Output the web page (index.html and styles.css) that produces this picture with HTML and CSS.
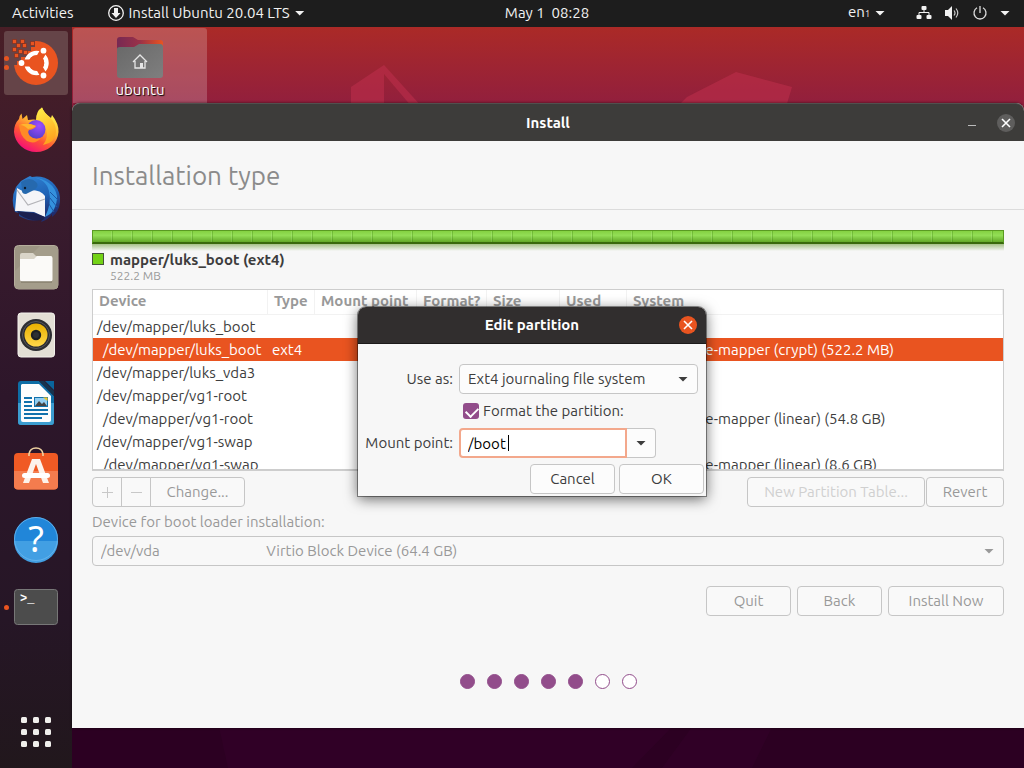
FILE: index.html
```html
<!DOCTYPE html>
<html lang="en">
<head>
    <meta charset="UTF-8">
    <title>Install</title>
    <meta name="viewport" content="width=device-width,initial-scale=1.0">
    <link rel="stylesheet" href="styles.css">
</head>
<body>
<div class="topbar">
    <div class="topLeft">
        <button class="barBtn">Activities</button>
        <button class="barBtn appMenu">
            <svg width="16" height="16" viewBox="0 0 16 16"><circle cx="8" cy="8" r="7.3" fill="none" stroke="#f2f2f2" stroke-width="1.3"/><path d="M6 3h4v5h2.5L8 13 3.500 8H6z" fill="#f2f2f2"/></svg>
            <span>Install Ubuntu 20.04 LTS</span>
            <i class="caret"></i>
        </button>
    </div>
    <button class="barBtn clock">May 1&nbsp; 08:28</button>
    <div class="topRight">
        <button class="barBtn lang"><span>en<small>1</small></span><i class="caret"></i></button>
        <button class="barBtn status" aria-label="System menu">
            <svg width="16" height="16" viewBox="0 0 16 16" fill="#f2f2f2"><rect x="5.500" y="1" width="5" height="4" rx="1"/><rect x="0.500" y="10" width="5" height="4" rx="1"/><rect x="10.500" y="10" width="5" height="4" rx="1"/><path d="M8 5v3M3 10V7.500h10V10" fill="none" stroke="#f2f2f2"/></svg>
            <svg width="16" height="16" viewBox="0 0 16 16"><path d="M1 5h3l4-4v14l-4-4H1z" fill="#f2f2f2"/><path d="M10 5.500q2 2.500 0 5M12 3.500q3.500 4.500 0 9" fill="none" stroke="#ccc" stroke-width="1.200"/></svg>
            <svg width="16" height="16" viewBox="0 0 16 16" fill="none" stroke="#ddd" stroke-width="1.300"><path d="M8 1v7M5 2.800a6 6 0 1 0 6 0"/></svg>
            <i class="caret"></i>
        </button>
    </div>
</div>
<div class="workspace">
    <div class="dock">
        <button class="dockItem active" aria-label="Install Ubuntu">
            <span class="run"><i></i><i></i></span>
            <svg width="48" height="48" viewBox="0 0 48 48">
                <clipPath id="cut"><path d="M23 0H48V48H0V26H5V22H9V18H15V12H19V8H23z"/></clipPath>
                <g fill="#e95420">
                    <circle cx="24" cy="24" r="22" clip-path="url(#cut)"/>
                    <path d="M0.500 0.500h4v4h-4zM8.500 0.500h4v4h-4zM18.500 2.500h4v4h-4zM4.500 4.500h4v4h-4zM10.500 4.500h4v4h-4zM0.500 8.500h4v4h-4zM6.500 10.500h4v4h-4zM11.500 11.500h4v4h-4zM2.500 14.500h4v4h-4z" stroke="#7a2c1c" stroke-width="0.600"/>
                </g>
                <circle cx="24.500" cy="24" r="10" fill="none" stroke="#fff" stroke-width="4.500"/>
                <path d="M24.500 24L31.500 12M24.500 24L31.500 36M24.500 24H10" stroke="#e95420" stroke-width="7"/>
                <circle cx="24.500" cy="24" r="7.700" fill="#e95420"/>
                <g fill="#fff"><circle cx="31.500" cy="11.700" r="2.900"/><circle cx="9.500" cy="24" r="2.900"/><circle cx="31.500" cy="36.500" r="2.900"/></g>
            </svg>
        </button>
        <button class="dockItem" aria-label="Firefox">
            <svg width="48" height="48" viewBox="0 0 48 48">
                <defs>
                    <linearGradient id="ff" x1="0.800" y1="0.100" x2="0.300" y2="1"><stop offset="0" stop-color="#fff44f"/><stop offset="0.350" stop-color="#ffb932"/><stop offset="0.650" stop-color="#ff5634"/><stop offset="1" stop-color="#f4087c"/></linearGradient>
                    <linearGradient id="fy" x1="0" y1="0" x2="0.300" y2="1"><stop offset="0" stop-color="#fff24a"/><stop offset="1" stop-color="#ffa51f"/></linearGradient>
                    <radialGradient id="fg" cx="0.650" cy="0.300" r="0.800"><stop offset="0" stop-color="#9f4dff"/><stop offset="1" stop-color="#4d3ec4"/></radialGradient>
                </defs>
                <path d="M9.500 6.500L10.500 12L15 8L16 13Q22 12 25 13Q25 5 30 0.500Q32 6 39 11L40 8Q47 17 46.500 25A22.300 21.500 0 0 1 2 25Q2 17 7 12Q7 9 9.500 6.500z" fill="url(#ff)"/>
                <path d="M24 13Q24 4 30 0.500Q32 6 38 10.500Q44 16 44 25Q43 36 31 38Q37 31 34 21Q31 14 24 13z" fill="url(#fy)"/>
                <circle cx="24" cy="22.500" r="9.500" fill="url(#fg)"/>
                <path d="M7 18Q14 14 24 19Q23 22 17 23Q15 25 18 29Q22 33 29 31Q23 38 15 34Q8 29 7 18z" fill="#ff8a27"/>
                <path d="M8 18Q15 15 24 19Q20 22 16 22Q12 18 8 18z" fill="#ffb52f"/>
            </svg>
        </button>
        <button class="dockItem" aria-label="Thunderbird">
            <svg width="48" height="48" viewBox="0 0 48 48">
                <defs><linearGradient id="tb" x1="0" y1="0" x2="0.400" y2="1"><stop offset="0" stop-color="#3387d8"/><stop offset="0.600" stop-color="#1f62b5"/><stop offset="1" stop-color="#202c6c"/></linearGradient></defs>
                <path d="M9 6Q14 3 18 1L20 2Q31 0 40 7Q49 15 48 27Q47 37 40 42L40 39Q37 44 29 47L31 43Q22 48 11 43L7 41V38L3 37Q-2 24 4 12z" fill="url(#tb)"/>
                <path d="M5 13Q14 19 19 15Q29 15 33 21V42L22 37L3 36z" fill="#f5f5f8"/>
                <path d="M5 15L16 30L33 24" fill="none" stroke="#b3b3b8" stroke-width="1.200"/>
                <path d="M9 7Q18 1 24 7Q28 11 22 15L14 19Q9 19 10 14z" fill="#2669ae"/>
                <circle cx="13" cy="13" r="1.200" fill="#0c1b30"/>
                <path d="M20 2Q34 4 37 16Q40 28 33 42Q45 37 45 21Q42 5 20 2z" fill="#3491dd"/>
                <path d="M38 17L46 25M38 23L45 32M37 29L42 37" stroke="#1b57a5" fill="none"/>
                <path d="M5 36L22 38L33 42L31 45Q18 47 8 40z" fill="#1a2050"/>
            </svg>
        </button>
        <button class="dockItem" aria-label="Files">
            <svg width="48" height="48" viewBox="0 0 48 48">
                <rect x="2.500" y="2.500" width="43.500" height="43.500" rx="4" fill="#9c9583" stroke="#b5ae9c"/>
                <path d="M3 28L28 3H42Q46 3 46 7V42Q46 46 42 46H7Q3 46 3 42z" fill="#a49d8b"/>
                <path d="M8 12Q8 10 10 10H21L24 13H38Q40 13 40 15V20H8z" fill="#d9d4c8"/>
                <path d="M8 16H22L25 13H38.500Q40.500 13 40.500 15V36.500Q40.500 38.500 38.500 38.500H10Q8 38.500 8 36.500z" fill="#fbfaf8"/>
                <path d="M9 39H40" stroke="#797260"/>
            </svg>
        </button>
        <button class="dockItem" aria-label="Rhythmbox">
            <svg width="48" height="48" viewBox="0 0 48 48">
                <defs><linearGradient id="rb" x1="0" y1="0" x2="0" y2="1"><stop offset="0" stop-color="#e8b000"/><stop offset="1" stop-color="#ffd84a"/></linearGradient></defs>
                <rect x="6" y="2" width="36.500" height="44" rx="3" fill="#e3dfd5" stroke="#f3f1ec"/>
                <circle cx="24" cy="24" r="16" fill="#2c2d31"/><circle cx="24" cy="24" r="13.500" fill="none" stroke="#54565b"/>
                <circle cx="24" cy="24" r="11.500" fill="url(#rb)"/><circle cx="24" cy="24" r="5.200" fill="#1d1f22"/><circle cx="24" cy="24" r="3" fill="#2e3033"/>
            </svg>
        </button>
        <button class="dockItem" aria-label="LibreOffice Writer">
            <svg width="48" height="48" viewBox="0 0 48 48">
                <path d="M9 2H27L42 17V43Q42 46 39 46H9Q6 46 6 43V5Q6 2 9 2z" fill="#0e6da5"/>
                <path d="M6 24H42V43Q42 46 39 46H9Q6 46 6 43z" fill="#3c9dd0"/>
                <path d="M33 2H42V11z" fill="#0a659d"/>
                <path d="M10 5H27L39 17V41Q39 43 37 43H11Q9 43 9 41V6z" fill="#fdfdfd"/>
                <path d="M27 2L42 17V12L32 2z" fill="#17334d"/>
                <path d="M12 19H20M12 23H20M12 27H20M12 31H36M12 35H36M12 39H30" stroke="#1272ad" stroke-width="1.800"/>
                <rect x="22.500" y="18.500" width="13" height="9" fill="#92cdf0" stroke="#1272ad"/>
                <path d="M23 27L27 22L30 25L32 23L35 27z" fill="#444"/><path d="M31 18.500H35.500V22z" fill="#f3c623"/>
            </svg>
        </button>
        <button class="dockItem" aria-label="Ubuntu Software">
            <svg width="48" height="48" viewBox="0 0 48 48">
                <rect x="2" y="6" width="44" height="36.500" rx="4" fill="#f05a24"/>
                <path d="M2 24H46V38.500Q46 42.500 42 42.500H6Q2 42.500 2 38.500z" fill="#f47c4e"/>
                <path d="M17 9V7Q18 1 24 1Q30 1 31 7V9" fill="none" stroke="#efd2a0" stroke-width="1.600"/>
                <path d="M20 12H28L37 36H31L24 17L17 36H11z" fill="#fdf3ec"/>
                <rect x="10" y="26" width="28" height="5" rx="2.500" fill="#fff"/>
            </svg>
        </button>
        <button class="dockItem" aria-label="Help">
            <svg width="48" height="48" viewBox="0 0 48 48">
                <circle cx="24" cy="24" r="22" fill="#2186d9"/><path d="M2 26H46A22 22 0 0 1 2 26z" fill="#429fe3"/>
                <circle cx="24" cy="24" r="21.500" fill="none" stroke="#6cb8ee" stroke-width="0.800"/>
                <text x="24" y="37" text-anchor="middle" class="helpMark">?</text>
            </svg>
        </button>
        <button class="dockItem" aria-label="Terminal">
            <span class="run"><i></i></span>
            <svg width="48" height="48" viewBox="0 0 48 48">
                <rect x="2.500" y="6.500" width="43" height="35" rx="3" fill="#4c4c4c" stroke="#777"/>
                <text x="8" y="19" class="prompt">&gt;_</text>
            </svg>
        </button>
        <button class="dockItem showApps" aria-label="Show Applications">
            <svg width="48" height="48" viewBox="0 0 48 48" fill="#f0efec">
                <rect x="9" y="9" width="6" height="6" rx="1.500"/><rect x="21" y="9" width="6" height="6" rx="1.500"/><rect x="33" y="9" width="6" height="6" rx="1.500"/>
                <rect x="9" y="21" width="6" height="6" rx="1.500"/><rect x="21" y="21" width="6" height="6" rx="1.500"/><rect x="33" y="21" width="6" height="6" rx="1.500"/>
                <rect x="9" y="33" width="6" height="6" rx="1.500"/><rect x="21" y="33" width="6" height="6" rx="1.500"/><rect x="33" y="33" width="6" height="6" rx="1.500"/>
            </svg>
        </button>
    </div>
    <div class="desktop">
        <!-- wallpaper shapes -->
        <svg class="wall" width="952" height="741" viewBox="0 0 952 741">
            <g fill="#c0304c" fill-opacity="0.55"><path d="M279 60L312 38V90H279z"/><path d="M312 38L350 80H340L312 47z"/><path d="M605 80L615 70L664 45L720 60L714 80z"/></g>
            <path d="M147 700H600L560 741H156zM620 700H700L680 741H590z" fill="#38002e" fill-opacity="0.4"/>
        </svg>
        <div class="homeIcon">
            <svg width="48" height="44" viewBox="0 0 48 44">
                <defs>
                    <linearGradient id="fb"><stop offset="0" stop-color="#772953"/><stop offset="0.500" stop-color="#9a3148"/><stop offset="1" stop-color="#e95420"/></linearGradient>
                    <linearGradient id="fo" x1="0" y1="0" x2="1" y2="1"><stop offset="0" stop-color="#686868"/><stop offset="1" stop-color="#7f7f7f"/></linearGradient>
                </defs>
                <path d="M1 4Q1 1 4 1H17L22 4H44Q47 4 47 7V20H1z" fill="url(#fb)"/>
                <path d="M1 13Q1 11 4 11H18L23 8H44Q47 8 47 11V39Q47 42 44 42H4Q1 42 1 39z" fill="url(#fo)"/>
                <path d="M17 26L24 19L31 26M19 25V32H29V25" fill="none" stroke="#e6e6e6" stroke-width="1.300"/><path d="M24 27h3v5h-3z" fill="#e6e6e6"/>
            </svg>
            <span>ubuntu</span>
        </div>
        <div class="window">
            <div class="titlebar">
                <h1>Install</h1>
                <div class="winBtns">
                    <button class="minBtn" aria-label="Minimize"></button>
                    <button class="closeBtn" aria-label="Close"><svg width="10" height="10" viewBox="0 0 10 10"><path d="M1 1L9 9M9 1L1 9" stroke="#fff" stroke-width="1.600"/></svg></button>
                </div>
            </div>
            <h2 class="pageTitle">Installation type</h2>
            <div class="main">
                <div class="partBar"></div>
                <div class="partReflect"></div>
                <div class="legend">
                    <i></i>
                    <div>
                        <b>mapper/luks_boot (ext4)</b>
                        <p>522.2 MB</p>
                    </div>
                </div>
                <div class="tableBox">
                    <table>
                        <colgroup><col class="cDevice"><col class="cType"><col class="cMount"><col class="cFormat"><col class="cSize"><col class="cUsed"><col></colgroup>
                        <thead>
                            <tr><th>Device</th><th>Type</th><th>Mount point</th><th>Format?</th><th>Size</th><th>Used</th><th>System</th></tr>
                        </thead>
                        <tbody>
                            <tr><td>/dev/mapper/luks_boot</td><td></td><td></td><td></td><td></td><td></td><td></td></tr>
                            <tr class="selected"><td class="sub">/dev/mapper/luks_boot</td><td>ext4</td><td></td><td></td><td></td><td></td><td>Linux device-mapper (crypt) (522.2 MB)</td></tr>
                            <tr><td>/dev/mapper/luks_vda3</td><td></td><td></td><td></td><td></td><td></td><td></td></tr>
                            <tr><td>/dev/mapper/vg1-root</td><td></td><td></td><td></td><td></td><td></td><td></td></tr>
                            <tr><td class="sub">/dev/mapper/vg1-root</td><td></td><td></td><td></td><td></td><td></td><td>Linux device-mapper (linear) (54.8 GB)</td></tr>
                            <tr><td>/dev/mapper/vg1-swap</td><td></td><td></td><td></td><td></td><td></td><td></td></tr>
                            <tr><td class="sub">/dev/mapper/vg1-swap</td><td></td><td></td><td></td><td></td><td></td><td>Linux device-mapper (linear) (8.6 GB)</td></tr>
                        </tbody>
                    </table>
                </div>
                <div class="toolRow">
                    <div class="linked">
                        <button class="btn off sq" aria-label="Add"><svg width="11" height="11" viewBox="0 0 11 11"><path d="M5.500 0V11M0 5.500H11" stroke="#c8c8c8"/></svg></button>
                        <button class="btn off sq" aria-label="Remove"><svg width="11" height="11" viewBox="0 0 11 11"><path d="M0 5.500H11" stroke="#c8c8c8"/></svg></button>
                        <button class="btn dim change">Change...</button>
                    </div>
                    <div class="tableBtns">
                        <button class="btn off newTable">New Partition Table...</button>
                        <button class="btn dim revert">Revert</button>
                    </div>
                </div>
                <label class="bootLabel" for="boot">Device for boot loader installation:</label>
                <div class="selectBox dimBox">
                    <select id="boot"><option>/dev/vda&nbsp;&nbsp;&nbsp;&nbsp;&nbsp;&nbsp;&nbsp;&nbsp;&nbsp;&nbsp;&nbsp;&nbsp;&nbsp;&nbsp;&nbsp;&nbsp;&nbsp;&nbsp;&nbsp;&nbsp;&nbsp;&nbsp;&nbsp;&nbsp;&nbsp;&nbsp;&nbsp;&nbsp;&nbsp;&nbsp;&nbsp;Virtio Block Device (64.4 GB)</option></select>
                    <i class="caret"></i>
                </div>
                <div class="navRow">
                    <button class="btn dim">Quit</button>
                    <button class="btn dim">Back</button>
                    <button class="btn dim installNow">Install Now</button>
                </div>
                <div class="steps"><i class="on"></i><i class="on"></i><i class="on"></i><i class="on"></i><i class="on"></i><i></i><i></i></div>
            </div>
        </div>
        <div class="dialog" role="dialog" aria-label="Edit partition">
            <div class="dialogTitle">
                <h3>Edit partition</h3>
                <button class="closeBtn" aria-label="Close"><svg width="10" height="10" viewBox="0 0 10 10"><path d="M1 1L9 9M9 1L1 9" stroke="#fff" stroke-width="1.600"/></svg></button>
            </div>
            <form class="form" onsubmit="return false">
                <label for="useAs">Use as:</label>
                <div class="selectBox">
                    <select id="useAs"><option>Ext4 journaling file system</option></select>
                    <i class="caret"></i>
                </div>
                <div class="formatRow"><input type="checkbox" id="format" checked><label for="format">Format the partition:</label></div>
                <label for="mount">Mount point:</label>
                <div class="combo">
                    <div class="entry"><input type="text" id="mount" value="/boot"><i class="cursor"></i></div>
                    <button class="btn" type="button" aria-label="Show mount points"><i class="caret"></i></button>
                </div>
            </form>
            <div class="dialogBtns">
                <button class="btn">Cancel</button>
                <button class="btn">OK</button>
            </div>
        </div>
    </div>
</div>
</body>
</html>
```
FILE: styles.css
```css
* {
    box-sizing: border-box;
    margin: 0;
    padding: 0;
}

body {
    display: flex;
    flex-direction: column;
    height: 100vh;
    overflow: hidden;
    background: #1d1d1d;
    color: #3d3d3d;
    font: 15px/20px Ubuntu, "Noto Sans", sans-serif;
}

button, input, select {font: inherit;color: inherit;}

button {background: none;border: 0;}

svg {display: block;flex: none;}

.caret {flex: none;width: 10px;height: 5px;background: currentColor;clip-path: polygon(0 0, 100% 0, 50% 100%);}

/* top bar */
.topbar {
    flex: none;
    display: grid;
    grid-template-columns: 1fr auto 1fr;
    align-items: center;
    height: 27px;
    padding: 0 14px 1px 12px;
    color: #f2f2f2;
}

.topLeft, .topRight, .barBtn {display: flex;align-items: center;white-space: nowrap;}

.topLeft {gap: 34px;}

.topRight {justify-content: flex-end;gap: 31px;}

.barBtn {gap: 5px;}

.status {gap: 12px;}

.clock {margin-left: 72px;}

.lang small {font-size: 9px;}

/* dock */
.workspace {flex: 1;display: flex;min-height: 0;}

.dock {
    flex: none;
    display: flex;
    flex-direction: column;
    gap: 4px;
    width: 72px;
    padding: 4px;
    background: linear-gradient(#491e26, #391b2d 25%, #2d162a 50%, #261626 80%, #21171c);
}

.dockItem {flex: none;display: flex;align-items: center;justify-content: center;position: relative;width: 64px;height: 64px;border-radius: 3px;}

.dockItem.active {background: #654448;}

.showApps {margin-top: auto;}

.run {position: absolute;left: 0;top: 0;height: 100%;display: flex;flex-direction: column;justify-content: center;gap: 4px;}

.run i {width: 5px;height: 5px;border-radius: 50%;background: #e95420;}

.helpMark {font: 36px "Noto Sans", sans-serif;fill: #fff;}

.prompt {font: bold 12px "Liberation Mono", monospace;fill: #fff;}

/* desktop */
.desktop {
    flex: 1;
    position: relative;
    display: flex;
    flex-direction: column;
    min-width: 0;
    padding: 1px 0 40px;
    background: linear-gradient(#ab2a27, #921f3d 76px, #2c0022 690px);
}

.wall {position: absolute;left: 0;top: 0;}

.homeIcon {
    flex: none;
    position: relative;
    display: flex;
    flex-direction: column;
    align-items: center;
    width: 134px;
    height: 75px;
    margin-left: 1px;
    padding-top: 8px;
    border-radius: 3px 3px 0 0;
    background: rgba(255, 255, 255, 0.2);
    color: #fff;
    text-shadow: 1px 1px 1px #000;
}

/* installer window */
.window {
    flex: 1;
    position: relative;
    display: flex;
    flex-direction: column;
    min-height: 0;
    background: #f7f7f7;
    border-radius: 8px 8px 0 0;
    box-shadow: 0 0 3px rgba(0, 0, 0, 0.6);
}

.titlebar {
    flex: none;
    display: grid;
    grid-template-columns: 1fr auto 1fr;
    align-items: center;
    height: 38px;
    padding: 0 9px;
    border-top: 1px solid #51504e;
    border-radius: 8px 8px 0 0;
    background: #3d3c3a;
    color: #fff;
}

.titlebar h1 {grid-column: 2;font-size: 15px;}

.winBtns {display: flex;align-items: center;justify-content: flex-end;gap: 21px;}

.minBtn {width: 8px;height: 6px;border-bottom: 1px solid #bbb;}

.closeBtn {display: flex;align-items: center;justify-content: center;width: 18px;height: 18px;border-radius: 50%;background: #5f5e5d;}

.pageTitle {
    flex: none;
    height: 69px;
    padding: 0 20px;
    border-bottom: 1px solid #dcdcdc;
    color: #8b8b8b;
    font-size: 26px;
    font-weight: 400;
    line-height: 69px;
}

.main {display: flex;flex-direction: column;padding: 20px 20px 0;}

.partBar {
    height: 14px;
    border: 1px solid #5a9a22;
    border-bottom: 2px solid #39690c;
    background: repeating-linear-gradient(90deg, transparent 0 18px, rgba(255, 255, 255, 0.1) 18px 19px, rgba(40, 110, 0, 0.25) 19px 20px), linear-gradient(#84d142, #93de56 40%, #62a827);
}

.partReflect {height: 7px;background: linear-gradient(#a5c088, #f7f7f7);}

.legend {display: flex;gap: 6px;height: 38px;}

.legend i {width: 12px;height: 12px;margin-top: 2px;border: 1px solid #45543a;background: #73d216;}

.legend b {display: block;line-height: 18px;}

.legend p {color: #999;font-size: 12px;line-height: 13px;}

.tableBox {height: 182px;overflow: hidden;border: 1px solid #cdcdcd;border-bottom-width: 2px;background: #fff;}

table {width: 100%;border-collapse: separate;border-spacing: 0;table-layout: fixed;}

th {height: 25px;padding: 0 0 2px 6px;border-right: 1px solid #f2f2f2;border-bottom: 1px solid #f2f2f2;color: #999;text-align: left;}

td {height: 23px;padding-left: 4px;}

th, td {line-height: 20px;white-space: nowrap;}

td.sub {padding-left: 10px;}

.selected {background: #e95420;color: #fff;}

.cDevice {width: 175px;}

.cType {width: 47px;}

.cMount {width: 102px;}

.cFormat {width: 70px;}

.cSize {width: 73px;}

.cUsed {width: 67px;}

/* buttons */
.btn {display: flex;align-items: center;justify-content: center;width: 85px;height: 30px;border: 1px solid #c6c6c6;border-radius: 4px;background: #fcfcfc;white-space: nowrap;}

.btn.dim {color: #999;background: #f9f9f9;}

.btn.off {color: #d0d0d0;background: #f9f9f9;}

.toolRow {display: flex;justify-content: space-between;margin-top: 6px;}

.tableBtns {display: flex;gap: 1px;}

.linked {display: flex;}

.linked .btn + .btn {margin-left: -1px;border-radius: 0;}

.linked .btn:first-child {border-radius: 4px 0 0 4px;}

.linked .btn:last-child {border-radius: 0 4px 4px 0;}

.btn.sq {width: 30px;}

.btn.change {width: 95px;}

.btn.newTable {width: 178px;}

.btn.revert {width: 78px;}

.btn.installNow {width: 116px;}

.bootLabel {margin: 5px 0 4px;color: #999;}

.selectBox {display: flex;align-items: center;position: relative;height: 30px;border: 1px solid #c6c6c6;border-radius: 4px;background: #fcfcfc;}

.selectBox select {width: 100%;height: 100%;padding: 0 8px;appearance: none;border: 0;background: none;}

.selectBox .caret {position: absolute;right: 9px;}

.dimBox {background: #f8f8f8;color: #999;}

.navRow {display: flex;justify-content: flex-end;gap: 6px;margin-top: 20px;}

.steps {display: flex;justify-content: center;gap: 12px;margin-top: 58px;}

.steps i {width: 15px;height: 15px;border: 1px solid #924d8b;border-radius: 50%;background: #fff;}

.steps .on {background: #924d8b;}

/* edit partition dialog */
.dialog {
    position: absolute;
    left: 286px;
    top: 280px;
    width: 348px;
    border-radius: 8px 8px 0 0;
    background: #f7f7f7;
    box-shadow: 0 0 0 1px rgba(0, 0, 0, 0.4), 0 3px 14px rgba(0, 0, 0, 0.6);
}

.dialogTitle {
    display: grid;
    grid-template-columns: 1fr auto 1fr;
    align-items: center;
    height: 37px;
    padding: 0 9px;
    border-bottom: 1px solid #1d1b1b;
    border-radius: 8px 8px 0 0;
    background: #312e2e;
    color: #fff;
}

.dialogTitle h3 {grid-column: 2;font-size: 15px;}

.dialogTitle .closeBtn {justify-self: end;background: #e95420;}

.form {display: grid;grid-template-columns: 87px 1fr;align-items: center;gap: 9px 6px;padding: 20px 8px 6px;}

.form > label {justify-self: end;white-space: nowrap;}

.formatRow {grid-column: 2;display: flex;align-items: center;gap: 4px;height: 16px;padding-left: 4px;}

.formatRow input {
    width: 16px;
    height: 16px;
    appearance: none;
    border-radius: 3px;
    background: #924d8b;
}

.formatRow input:checked::after {content: "";display: block;width: 10px;height: 6px;margin: 4px 3px;border: solid #fff;border-width: 0 0 2px 2px;transform: rotate(-45deg);}

.formatRow input::after {margin-top: 3px;}

.combo {display: flex;}

.entry {display: flex;align-items: center;position: relative;width: 168px;height: 30px;border: 2px solid #f3a88c;border-radius: 4px 0 0 4px;background: #fff;color: #000;}

.entry input {width: 100%;height: 100%;padding: 0 7px;border: 0;outline: 0;background: none;}

.entry .cursor {position: absolute;left: 47px;width: 1px;height: 16px;background: #000;}

.combo .btn {width: 29px;border-left: 0;border-radius: 0 4px 4px 0;}

.dialogBtns {display: flex;justify-content: flex-end;gap: 4px;padding: 0 2px 2px;}
```
